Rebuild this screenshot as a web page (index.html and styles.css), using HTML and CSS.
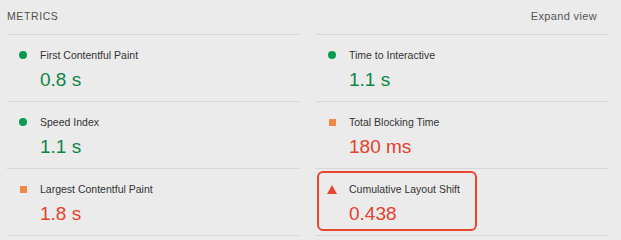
FILE: index.html
```html
<!DOCTYPE html>
<html lang="en">
<head>
    <meta charset="UTF-8">
    <meta name="viewport" content="width=device-width, initial-scale=1.0">
    <title>Metrics</title>
    <link rel="stylesheet" href="styles.css">
</head>
<body>
    <div class="metrics">
        <div class="metrics-head">
            <span class="metrics-title">METRICS</span>
        </div>
        <div class="metrics-head metrics-head-right">
            <span class="metrics-toggle">Expand view</span>
        </div>

        <div class="metric">
            <div class="metric-box">
                <div class="metric-label"><span class="icon icon-pass"></span>First Contentful Paint</div>
                <div class="metric-value pass">0.8 s</div>
            </div>
        </div>
        <div class="metric">
            <div class="metric-box">
                <div class="metric-label"><span class="icon icon-pass"></span>Time to Interactive</div>
                <div class="metric-value pass">1.1 s</div>
            </div>
        </div>

        <div class="metric">
            <div class="metric-box">
                <div class="metric-label"><span class="icon icon-pass"></span>Speed Index</div>
                <div class="metric-value pass">1.1 s</div>
            </div>
        </div>
        <div class="metric">
            <div class="metric-box">
                <div class="metric-label"><span class="icon icon-average"></span>Total Blocking Time</div>
                <div class="metric-value fail">180 ms</div>
            </div>
        </div>

        <div class="metric">
            <div class="metric-box">
                <div class="metric-label"><span class="icon icon-average"></span>Largest Contentful Paint</div>
                <div class="metric-value fail">1.8 s</div>
            </div>
        </div>
        <div class="metric">
            <div class="metric-box highlight">
                <div class="metric-label"><span class="icon icon-fail"></span>Cumulative Layout Shift</div>
                <div class="metric-value fail">0.438</div>
            </div>
        </div>
    </div>
</body>
</html>
```

FILE: styles.css
```css
body {
    margin: 0;
    padding: 0;
    background-color: #ebebeb;
    font-family: "Liberation Sans", Arial, sans-serif;
    color: #333;
}

.metrics {
    display: grid;
    grid-template-columns: 292px 292px;
    column-gap: 17px;
    padding: 0 13px 0 7px;
}

.metrics-head {
    border-bottom: 1px solid #d6d6d6;
    display: flex;
    align-items: flex-start;
    padding-top: 9px;
    box-sizing: border-box;
    height: 35px;
    line-height: 14px;
}
.metrics-head-right {
    justify-content: flex-end;
    padding-right: 11px;
}
.metrics-title {
    font-size: 10.5px;
    letter-spacing: 0.6px;
    color: #4f4f4f;
}
.metrics-toggle {
    font-size: 11px;
    letter-spacing: 0.35px;
    color: #555;
}

.metric {
    height: 67px;
    box-sizing: border-box;
    border-bottom: 1px solid #d6d6d6;
    padding-top: 2px;
}

.metric-box {
    display: inline-block;
    margin-left: 1px;
    padding: 9px 15px 4px 9px;
    border: 2px solid transparent;
    border-radius: 6px;
}
.metric-box.highlight {
    border-color: #e8472f;
}

.metric-label {
    display: flex;
    align-items: center;
    font-size: 10.5px;
    line-height: 14px;
    color: #333;
}
.metric-value {
    margin-top: 7px;
    padding-left: 21px;
    font-size: 19px;
    line-height: 22px;
}
.metric-value.pass {
    color: #0b8745;
}
.metric-value.fail {
    color: #e5412b;
}

.icon {
    width: 8px;
    height: 8px;
    margin-right: 13px;
    flex-shrink: 0;
}
.icon-pass {
    border-radius: 50%;
    background-color: #0a9b52;
}
.icon-average {
    width: 7px;
    height: 7px;
    margin-left: 1px;
    margin-right: 13px;
    background-color: #ee8a48;
}
.icon-fail {
    width: 0;
    height: 0;
    border-left: 5px solid transparent;
    border-right: 5px solid transparent;
    border-bottom: 9px solid #e8472f;
    margin-left: -1px;
    margin-right: 12px;
}
```
